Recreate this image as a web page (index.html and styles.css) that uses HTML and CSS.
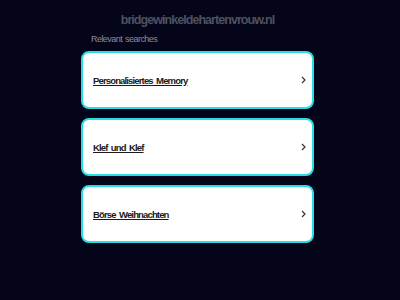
FILE: index.html
```html
<!DOCTYPE html>
<html lang="nl">
<head>
    <meta charset="UTF-8">
    <meta name="viewport" content="width=device-width, initial-scale=1.0">
    <title>bridgewinkeldehartenvrouw.nl</title>
    <link rel="stylesheet" href="styles.css">
</head>
<body>
    <div class="container">
        <h1 class="domain">bridgewinkeldehartenvrouw.nl</h1>
        <p class="label">Relevant searches</p>

        <div class="results">
            <a class="result" href="#">
                <span class="result-text">Personalisiertes Memory</span>
                <svg class="chevron" width="5" height="8" viewBox="0 0 5 8"><polyline points="1,1 4,4 1,7" /></svg>
            </a>
            <a class="result" href="#">
                <span class="result-text">Klef und Klef</span>
                <svg class="chevron" width="5" height="8" viewBox="0 0 5 8"><polyline points="1,1 4,4 1,7" /></svg>
            </a>
            <a class="result" href="#">
                <span class="result-text">Börse Weihnachten</span>
                <svg class="chevron" width="5" height="8" viewBox="0 0 5 8"><polyline points="1,1 4,4 1,7" /></svg>
            </a>
        </div>
    </div>
</body>
</html>
```

FILE: styles.css
```css
body {
    font-family: 'Liberation Sans', Arial, sans-serif;
    margin: 0;
    background-color: #05051a;
}
.container {
    margin: 0 86px 0 81px;
    padding-top: 12px;
}
.domain {
    margin: 0;
    font-size: 12.5px;
    font-weight: bold;
    letter-spacing: -0.95px;
    line-height: 16px;
    color: #4d5161;
    text-align: center;
}
.label {
    margin: 5px 0 0 10px;
    font-size: 9px;
    letter-spacing: -0.55px;
    word-spacing: 1px;
    line-height: 12px;
    color: #8a8c96;
}
.results {
    display: flex;
    flex-direction: column;
    gap: 9px;
    margin-top: 6px;
}
.result {
    display: flex;
    align-items: center;
    justify-content: space-between;
    height: 54px;
    padding: 0 6px 0 10px;
    background-color: white;
    border: 2px solid #29dde6;
    border-radius: 8px;
    text-decoration: none;
}
.result-text {
    font-size: 9.5px;
    font-weight: bold;
    letter-spacing: -0.85px;
    word-spacing: 1.5px;
    color: #1a1a1a;
    text-decoration: underline;
}
.chevron {
    fill: none;
    stroke: #333;
    stroke-width: 1.2;
}
```
